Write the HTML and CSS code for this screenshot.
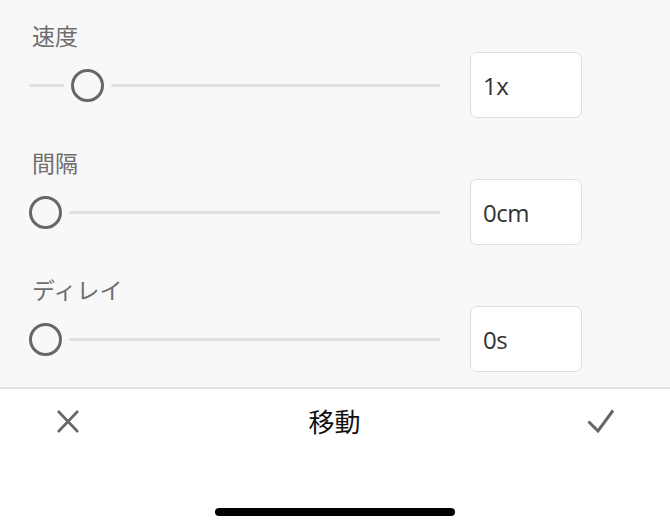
FILE: index.html
```html
<!DOCTYPE html>
<html lang="ja">
<head>
<meta charset="utf-8">
<title>移動</title>
<link rel="stylesheet" href="styles.css">
</head>
<body>
<div class="screen">
  <section class="panel">
    <div class="row">
      <div class="label">速度</div>
      <div class="slider">
        <div class="track" style="width:35px"></div>
        <div class="thumb"></div>
        <div class="track fill"></div>
      </div>
      <div class="field">1x</div>
    </div>
    <div class="row">
      <div class="label">間隔</div>
      <div class="slider">
        <div class="thumb"></div>
        <div class="track fill"></div>
      </div>
      <div class="field">0cm</div>
    </div>
    <div class="row">
      <div class="label">ディレイ</div>
      <div class="slider">
        <div class="thumb"></div>
        <div class="track fill"></div>
      </div>
      <div class="field">0s</div>
    </div>
  </section>
  <footer class="bottom">
    <div class="toolbar">
      <button class="icon-btn" aria-label="キャンセル">
        <svg width="40" height="40" viewBox="0 0 40 40"><path d="M10 10 L30 31 M30 10 L10 31" stroke="#666" stroke-width="2.6" fill="none"/></svg>
      </button>
      <div class="title">移動</div>
      <button class="icon-btn" aria-label="完了">
        <svg width="40" height="40" viewBox="0 0 40 40"><path d="M7.5 20.5 L17 30 L32 9.5" stroke="#666" stroke-width="3" fill="none" stroke-linejoin="miter"/></svg>
      </button>
    </div>
    <div class="home-indicator"></div>
  </footer>
</div>
</body>
</html>
```
FILE: styles.css
```css
html, body {
  margin: 0;
  padding: 0;
  background: #ffffff;
}
.screen {
  width: 670px;
  height: 530px;
  display: flex;
  flex-direction: column;
  font-family: "Noto Sans CJK JP", "Noto Sans", sans-serif;
}
.panel {
  height: 389px;
  box-sizing: border-box;
  background: #f8f8f8;
  border-bottom: 2px solid #e2e2e2;
  padding: 21px 88px 0 29px;
  display: flex;
  flex-direction: column;
  gap: 30px;
}
.row {
  display: grid;
  grid-template-columns: 411px 112px;
  grid-template-rows: 28px 66px;
  column-gap: 30px;
  row-gap: 3px;
  align-items: center;
}
.label {
  grid-column: 1 / 3;
  font-size: 23px;
  line-height: 28px;
  color: #6e6e6e;
  padding-left: 3px;
}
.slider {
  display: flex;
  align-items: center;
  gap: 7px;
  height: 33px;
}
.track {
  height: 3px;
  background: #e0e0e0;
  border-radius: 1.5px;
}
.track.fill {
  flex: 1;
}
.thumb {
  width: 33px;
  height: 33px;
  box-sizing: border-box;
  border: 3px solid #676767;
  border-radius: 50%;
  flex: none;
}
.field {
  height: 66px;
  box-sizing: border-box;
  background: #ffffff;
  border: 1.5px solid #dedede;
  border-radius: 7px;
  padding-left: 12px;
  display: flex;
  align-items: center;
  font-family: "Open Sans", "Noto Sans", sans-serif;
  font-size: 24px;
  color: #333333;
  letter-spacing: -0.5px;
}
.bottom {
  flex: 1;
  display: flex;
  flex-direction: column;
  align-items: center;
}
.toolbar {
  width: 100%;
  box-sizing: border-box;
  height: 64px;
  display: flex;
  align-items: center;
  justify-content: space-between;
  padding: 0 49px 0 48px;
}
.icon-btn {
  width: 40px;
  height: 40px;
  padding: 0;
  border: 0;
  background: none;
  display: block;
}
.icon-btn svg {
  display: block;
}
.title {
  font-size: 26px;
  color: #111111;
  line-height: 40px;
}
.home-indicator {
  margin-top: 55px;
  width: 240px;
  height: 8px;
  border-radius: 4px;
  background: #000000;
}
```
